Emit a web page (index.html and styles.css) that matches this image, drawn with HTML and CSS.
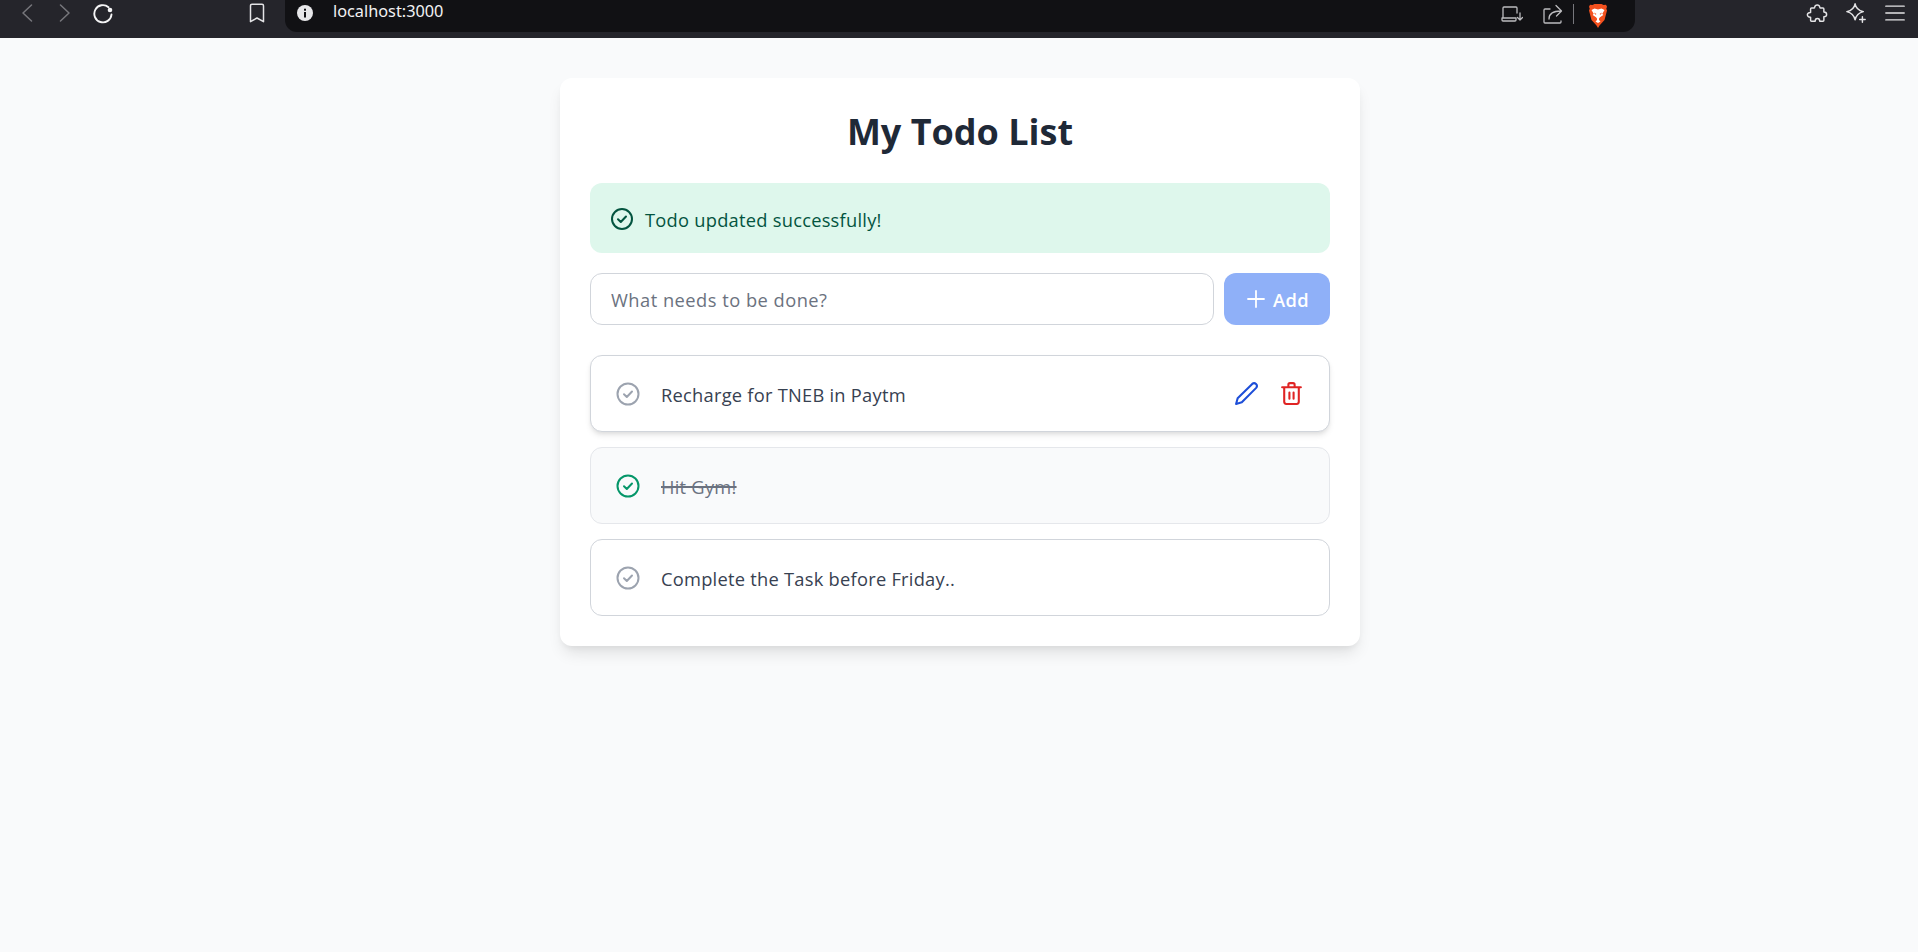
FILE: index.html
```html
<!DOCTYPE html>
<html lang="en">
<head>
<meta charset="utf-8">
<title>My Todo List</title>
<link rel="stylesheet" href="styles.css">
</head>
<body>
<header class="chrome">
  <div class="nav">
    <svg class="ic back" viewBox="0 0 12 18"><path d="M10.500 1 2 9l8.500 8"/></svg>
    <svg class="ic fwd" viewBox="0 0 12 18"><path d="M1.500 1 10 9l-8.500 8"/></svg>
    <svg class="ic reload" viewBox="0 0 22 22"><path d="M16.500 5.200A8.600 8.600 0 1 0 19.500 12.500"/><circle class="dot" cx="18" cy="8" r="2.300"/></svg>
    <svg class="ic mark" viewBox="0 0 16 20"><path d="M3 1.200h10a1.500 1.500 0 0 1 1.500 1.500v16L8 15l-6.500 3.700v-16A1.500 1.500 0 0 1 3 1.200z"/></svg>
  </div>
  <div class="omnibox">
    <svg class="info" viewBox="0 0 18 18"><circle cx="9" cy="9" r="8" fill="#e8e8ea"/><rect x="8" y="8" width="2" height="5.500" fill="#111114"/><rect x="8" y="4.700" width="2" height="2" fill="#111114"/></svg>
    <span class="url">localhost:3000</span>
    <div class="omni-right">
      <svg class="ic small" viewBox="0 0 22 16"><path d="M16 7V2a1 1 0 0 0-1-1H3a1 1 0 0 0-1 1v10M1 12v2a1 1 0 0 0 1 1h12a1 1 0 0 0 1-1v-2zM19 7v7M16.500 11.500 19 14l2.500-2.500"/></svg>
      <svg class="ic share" viewBox="0 0 20 20"><path d="M7 5H2a1 1 0 0 0-1 1v12a1 1 0 0 0 1 1h15a1 1 0 0 0 1-1v-1M6 15c0-5 3-8 12-8M13 1.500l5.500 5.500-5 5"/></svg>
      <span class="sep"></span>
      <svg class="brave" viewBox="0 0 20 24"><path fill="#f4511e" d="M4.500 1 6.500 0h7l2 1 2.500-.3 1 2-.7 2 .7 1.800-2.500 9.500-5 5.500L10 24l-1.500-2.500-5-5.500L1 6.500l.7-1.800-.7-2 1-2z"/><path fill="#fff" d="M3.500 6 6.500 4.500 10 5.500l3.500-1 3 1.500-2.200 3.800 1 1.200-3.300 2.300-1 1.200v1.500l1.500 1.500L10 19l-2.500-1.500L9 16v-1.500L8 13.300 4.700 11l1-1.200z"/><path fill="#f4511e" d="M6 8.500l2.500 1.500-1.200.7zM14 8.500 11.500 10l1.200.7z"/></svg>
    </div>
  </div>
  <div class="tools">
    <svg class="ic" viewBox="0 0 24 24"><path d="M9.500 5.500a2.800 2.800 0 0 1 5.500 0c0 .6 0 1 .5 1h3a1 1 0 0 1 1 1v3.500c1.800 0 3 1 3 2.500s-1.200 2.500-3 2.500V20a1 1 0 0 1-1 1h-3.500c0-2-1-3-2.500-3s-2.500 1-2.500 3H6a1 1 0 0 1-1-1v-3.500c-2 .2-3.500-1-3.500-2.500s1.500-2.700 3.500-2.500V7.500a1 1 0 0 1 1-1h3c.3 0 .5-.4.500-1z"/></svg>
    <svg class="ic" viewBox="0 0 24 24"><path d="M11 2c.8 4.500 3.500 7.200 9 8.500-5 1.200-7.800 3.800-9 9-1.200-5.200-4-7.800-9-9 5.500-1.300 8.200-4 9-8.500zM19 16v6M16 19h6"/></svg>
    <svg class="ic" viewBox="0 0 24 24"><path d="M2 4.500h20M2 12h20M2 19.500h20"/></svg>
  </div>
</header>

<main class="page">
  <section class="card">
    <h1 class="title">My Todo List</h1>
    <div class="alert">
      <svg class="check alert-icon" viewBox="0 0 24 24"><circle cx="12" cy="12" r="10"/><path d="m8 12.300 2.800 2.700L16 9.500"/></svg>
      <span class="alert-text">Todo updated successfully!</span>
    </div>
    <form class="add-form">
      <input class="add-input" type="text" placeholder="What needs to be done?">
      <button class="add-btn" type="button">
        <svg class="plus" viewBox="0 0 18 18"><path d="M9 1v16M1 9h16"/></svg>
        Add
      </button>
    </form>
    <ul class="list">
      <li class="item hover">
        <svg class="check state" viewBox="0 0 24 24"><circle cx="12" cy="12" r="10.500"/><path d="m8 12.300 2.800 2.700L16 9.500"/></svg>
        <span class="label">Recharge for TNEB in Paytm</span>
        <div class="actions">
          <svg class="act edit" viewBox="0 0 24 24"><path d="M17.500 2.800a2.700 2.700 0 0 1 3.800 3.800L7.500 20.500 2 22l1.500-5.500z"/></svg>
          <svg class="act del" viewBox="0 0 24 24"><path d="M3 6h18M9 6V3.500A1.500 1.500 0 0 1 10.500 2h3A1.500 1.500 0 0 1 15 3.500V6M5 6v14a2 2 0 0 0 2 2h10a2 2 0 0 0 2-2V6M10 11v6M14 11v6"/></svg>
        </div>
      </li>
      <li class="item done">
        <svg class="check state" viewBox="0 0 24 24"><circle cx="12" cy="12" r="10.500"/><path d="m8 12.300 2.800 2.700L16 9.500"/></svg>
        <span class="label">Hit Gym!</span>
      </li>
      <li class="item">
        <svg class="check state" viewBox="0 0 24 24"><circle cx="12" cy="12" r="10.500"/><path d="m8 12.300 2.800 2.700L16 9.500"/></svg>
        <span class="label">Complete the Task before Friday..</span>
      </li>
    </ul>
  </section>
</main>
</body>
</html>
```

FILE: styles.css
```css
* { box-sizing: border-box; }
html, body { height: 100%; }
body {
  margin: 0;
  display: flex;
  flex-direction: column;
  background: #f9fafb;
  font-family: "Open Sans", "Noto Sans", sans-serif;
  overflow: hidden;
}

/* browser chrome */
.chrome {
  flex: none;
  height: 38px;
  background: #25252b;
  display: flex;
  align-items: flex-start;
}
.ic {
  fill: none;
  stroke: #e4e4e6;
  stroke-width: 1.8;
  stroke-linecap: round;
  stroke-linejoin: round;
  width: 20px;
  height: 20px;
}
.nav {
  width: 285px;
  flex: none;
  height: 25px;
  display: flex;
  align-items: center;
  padding-left: 21px;
}
.back, .fwd { stroke: #77777c; width: 12px; height: 18px; stroke-width: 1.5; }
.fwd { margin-left: 26px; }
.reload { margin-left: 21px; width: 22px; height: 22px; stroke: #f4f4f5; stroke-width: 1.9; }
.reload .dot { fill: #f4f4f5; stroke: none; }
.mark { margin-left: 135px; width: 16px; height: 20px; stroke-width: 1.5; }
.omnibox {
  width: 1350px;
  flex: none;
  height: 32px;
  background: #111114;
  border-radius: 0 0 12px 12px;
  display: flex;
  align-items: flex-start;
  padding: 4px 27px 0 11px;
  color: #f1f1f3;
}
.info { width: 18px; height: 18px; }
.url { margin-left: 19px; font: 16.3px/15px "Noto Sans", sans-serif; }
.omni-right { margin-left: auto; display: flex; align-items: center; height: 20px; }
.small { width: 22px; height: 16px; stroke: #bcbcbf; stroke-width: 1.3; }
.share { margin-left: 20px; width: 20px; height: 20px; stroke: #bcbcbf; stroke-width: 1.3; }
.sep { width: 1px; height: 20px; background: #77777c; margin-left: 10px; }
.brave { width: 20px; height: 24px; margin-left: 14px; margin-top: 3px; }
.tools {
  flex: 1;
  display: flex;
  gap: 17px;
  padding: 2px 0 0 171px;
}
.tools .ic { width: 22px; height: 22px; stroke-width: 1.6; }

/* page */
.page {
  flex: 1;
  display: flex;
  justify-content: center;
  align-items: flex-start;
  padding: 40px 0 0 2px;
}
.card {
  width: 800px;
  padding: 30px;
  background: #fff;
  border-radius: 12px;
  box-shadow: 0 10px 15px -3px rgba(0,0,0,.1), 0 4px 6px -2px rgba(0,0,0,.05);
}
.title {
  margin: 0 0 30px;
  text-align: center;
  font-size: 36px;
  line-height: 48px;
  font-weight: 700;
  color: #1f2937;
  height: 45px;
}
.alert {
  display: flex;
  align-items: center;
  gap: 11px;
  height: 70px;
  padding: 2px 20px 0;
  background: #def7ec;
  border-radius: 12px;
  color: #03543f;
  font-size: 18.3px;
  letter-spacing: .25px;
}
.check { fill: none; stroke: currentColor; stroke-width: 2; stroke-linecap: round; stroke-linejoin: round; flex: none; }
.alert-icon { width: 24px; height: 24px; }
.add-form { display: flex; gap: 10px; margin: 20px 0 30px; }
.add-input {
  flex: 1;
  height: 52px;
  padding: 0 20px;
  border: 1px solid #d1d5db;
  border-radius: 12px;
  font: 18.3px "Open Sans", sans-serif;
  letter-spacing: .48px;
  color: #374151;
  background: #fff;
}
.add-input::placeholder { color: #6b7280; opacity: 1; }
.add-btn {
  width: 106px;
  height: 52px;
  padding: 0 0 0 2px;
  border: 0;
  border-radius: 12px;
  background: #8fb0f8;
  color: #fff;
  font: 600 18.3px "Open Sans", sans-serif;
  letter-spacing: .4px;
  display: flex;
  align-items: center;
  justify-content: center;
  gap: 8px;
}
.plus { width: 18px; height: 18px; fill: none; stroke: #fff; stroke-width: 1.8; stroke-linecap: round; }
.list { list-style: none; margin: 0; padding: 0; display: flex; flex-direction: column; gap: 15px; }
.item {
  display: flex;
  align-items: center;
  height: 77px;
  padding: 0 25px;
  border: 1px solid #d1d5db;
  border-radius: 12px;
  background: #fff;
  color: #374151;
  font-size: 18.3px;
  letter-spacing: .25px;
}
.hover { box-shadow: 0 4px 6px -1px rgba(0,0,0,.1), 0 2px 4px -1px rgba(0,0,0,.06); }
.state { width: 24px; height: 24px; color: #9ca3af; }
.label { margin-left: 21px; position: relative; top: 1px; }
.done { background: #f9fafb; border-color: #e5e7eb; }
.done .state { color: #059669; }
.done .label { color: #6b7280; text-decoration: line-through; text-decoration-thickness: 1.5px; }
.actions { margin-left: auto; display: flex; gap: 20px; }
.act { width: 25px; height: 25px; fill: none; stroke-width: 2; stroke-linecap: round; stroke-linejoin: round; }
.edit { stroke: #1d4ed8; }
.del { stroke: #e02424; }
```
